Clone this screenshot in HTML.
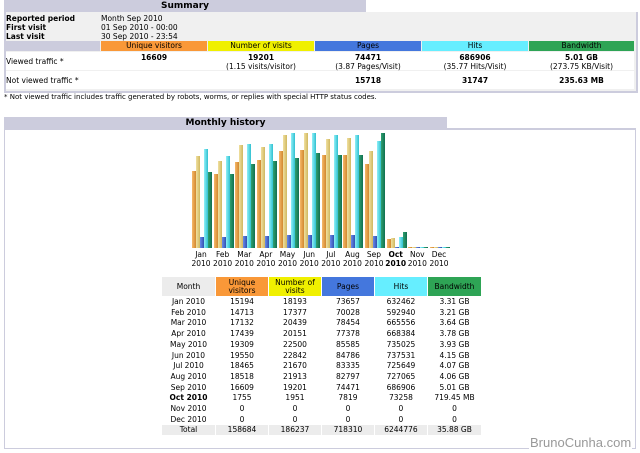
<!DOCTYPE html>
<html><head><meta charset="utf-8"><style>
body{margin:0;width:640px;height:453px;background:#fff;font-family:"DejaVu Sans","Liberation Sans",sans-serif;font-size:7.5px;color:#000;position:relative;overflow:hidden}
.a{position:absolute}
.hdr{background:#ccccdd;font-weight:bold;font-size:9px;text-align:center;line-height:12px}
.box{border:1px solid #ccccdd;border-top:0}
.c{text-align:center}
.b{font-weight:bold}
.bar{position:absolute;bottom:0;width:4px}
.o{background:linear-gradient(90deg,#f7b868,#d08830)}
.y{background:linear-gradient(90deg,#f0e0a0,#d0b860)}
.p{background:linear-gradient(90deg,#6a8ae8,#3050b0)}
.h{background:linear-gradient(90deg,#90f0f8,#30c0d0)}
.g{background:linear-gradient(90deg,#30a070,#107050)}
table{border-collapse:separate;border-spacing:1px;font-size:7.5px}
td{padding:0;text-align:center;height:9.7px;line-height:9.7px}
</style></head><body>
<div class="a hdr" style="left:4px;top:0;width:362px;height:12px">Summary</div>
<div class="a box" style="left:4px;top:12px;width:630px;height:79px;background:#f0f0f0;border-width:2px"></div>
<div class="a b" style="left:6px;top:14px;line-height:9px">Reported period<br>First visit<br>Last visit</div>
<div class="a" style="left:101px;top:14px;line-height:9px">Month Sep 2010<br>01 Sep 2010 - 00:00<br>30 Sep 2010 - 23:54</div>
<div class="a" style="left:6px;top:41px;width:94px;height:10px;background:#ccccdd"></div>
<div class="a c" style="left:101px;top:41px;width:106px;height:10px;line-height:10px;background:#f99838">Unique visitors</div>
<div class="a c" style="left:208px;top:41px;width:106px;height:10px;line-height:10px;background:#f0f000">Number of visits</div>
<div class="a c" style="left:315px;top:41px;width:106px;height:10px;line-height:10px;background:#4477dd">Pages</div>
<div class="a c" style="left:422px;top:41px;width:106px;height:10px;line-height:10px;background:#66eeff">Hits</div>
<div class="a c" style="left:529px;top:41px;width:105px;height:10px;line-height:10px;background:#2ea455">Bandwidth</div>
<div class="a" style="left:6px;top:52px;width:628px;height:18px;background:#fff"></div>
<div class="a" style="left:6px;top:71px;width:628px;height:18px;background:#fff"></div>
<div class="a" style="left:6px;top:57px">Viewed traffic *</div>
<div class="a" style="left:6px;top:76px">Not viewed traffic *</div>
<div class="a c" style="left:101px;top:53px;width:106px;line-height:9px"><b>16609</b></div>
<div class="a c" style="left:208px;top:53px;width:106px;line-height:9px"><b>19201</b><br>(1.15 visits/visitor)</div>
<div class="a c" style="left:315px;top:53px;width:106px;line-height:9px"><b>74471</b><br>(3.87 Pages/Visit)</div>
<div class="a c" style="left:422px;top:53px;width:106px;line-height:9px"><b>686906</b><br>(35.77 Hits/Visit)</div>
<div class="a c" style="left:529px;top:53px;width:105px;line-height:9px"><b>5.01 GB</b><br>(273.75 KB/Visit)</div>
<div class="a c b" style="left:315px;top:76px;width:106px">15718</div>
<div class="a c b" style="left:422px;top:76px;width:106px">31747</div>
<div class="a c b" style="left:529px;top:76px;width:105px">235.63 MB</div>
<div class="a" style="left:4px;top:93px;font-size:7px">* Not viewed traffic includes traffic generated by robots, worms, or replies with special HTTP status codes.</div>

<div class="a hdr" style="left:4px;top:117px;width:443px;height:12px">Monthly history</div>
<div class="a box" style="left:4px;top:128px;width:630px;height:318px;border-top:2px solid #ccccdd"></div>

<div class="a" style="left:192px;top:128px;width:260px;height:120px">
<div class="a" style="left:0;bottom:0;height:120px;width:21px">
<div class="bar o" style="left:0;height:77px"></div><div class="bar y" style="left:4px;height:92px"></div><div class="bar p" style="left:8px;height:11px"></div><div class="bar h" style="left:12px;height:99px"></div><div class="bar g" style="left:16px;height:76px"></div></div>
<div class="a" style="left:21.6px;bottom:0;height:120px;width:21px">
<div class="bar o" style="left:0;height:74px"></div><div class="bar y" style="left:4px;height:87px"></div><div class="bar p" style="left:8px;height:11px"></div><div class="bar h" style="left:12px;height:92px"></div><div class="bar g" style="left:16px;height:74px"></div></div>
<div class="a" style="left:43.3px;bottom:0;height:120px;width:21px">
<div class="bar o" style="left:0;height:86px"></div><div class="bar y" style="left:4px;height:103px"></div><div class="bar p" style="left:8px;height:12px"></div><div class="bar h" style="left:12px;height:104px"></div><div class="bar g" style="left:16px;height:84px"></div></div>
<div class="a" style="left:64.9px;bottom:0;height:120px;width:21px">
<div class="bar o" style="left:0;height:88px"></div><div class="bar y" style="left:4px;height:101px"></div><div class="bar p" style="left:8px;height:12px"></div><div class="bar h" style="left:12px;height:104px"></div><div class="bar g" style="left:16px;height:87px"></div></div>
<div class="a" style="left:86.5px;bottom:0;height:120px;width:21px">
<div class="bar o" style="left:0;height:97px"></div><div class="bar y" style="left:4px;height:113px"></div><div class="bar p" style="left:8px;height:13px"></div><div class="bar h" style="left:12px;height:115px"></div><div class="bar g" style="left:16px;height:90px"></div></div>
<div class="a" style="left:108.2px;bottom:0;height:120px;width:21px">
<div class="bar o" style="left:0;height:98px"></div><div class="bar y" style="left:4px;height:115px"></div><div class="bar p" style="left:8px;height:13px"></div><div class="bar h" style="left:12px;height:115px"></div><div class="bar g" style="left:16px;height:95px"></div></div>
<div class="a" style="left:129.8px;bottom:0;height:120px;width:21px">
<div class="bar o" style="left:0;height:93px"></div><div class="bar y" style="left:4px;height:109px"></div><div class="bar p" style="left:8px;height:13px"></div><div class="bar h" style="left:12px;height:113px"></div><div class="bar g" style="left:16px;height:93px"></div></div>
<div class="a" style="left:151.4px;bottom:0;height:120px;width:21px">
<div class="bar o" style="left:0;height:93px"></div><div class="bar y" style="left:4px;height:110px"></div><div class="bar p" style="left:8px;height:13px"></div><div class="bar h" style="left:12px;height:113px"></div><div class="bar g" style="left:16px;height:93px"></div></div>
<div class="a" style="left:173px;bottom:0;height:120px;width:21px">
<div class="bar o" style="left:0;height:84px"></div><div class="bar y" style="left:4px;height:97px"></div><div class="bar p" style="left:8px;height:12px"></div><div class="bar h" style="left:12px;height:107px"></div><div class="bar g" style="left:16px;height:115px"></div></div>
<div class="a" style="left:194.7px;bottom:0;height:120px;width:21px">
<div class="bar o" style="left:0;height:9px"></div><div class="bar y" style="left:4px;height:10px"></div><div class="bar p" style="left:8px;height:1px"></div><div class="bar h" style="left:12px;height:11px"></div><div class="bar g" style="left:16px;height:16px"></div></div>
<div class="a" style="left:216.3px;bottom:0;height:120px;width:21px">
<div class="bar o" style="left:0;height:1px"></div><div class="bar y" style="left:4px;height:1px"></div><div class="bar p" style="left:8px;height:1px"></div><div class="bar h" style="left:12px;height:1px"></div><div class="bar g" style="left:16px;height:1px"></div></div>
<div class="a" style="left:238px;bottom:0;height:120px;width:21px">
<div class="bar o" style="left:0;height:1px"></div><div class="bar y" style="left:4px;height:1px"></div><div class="bar p" style="left:8px;height:1px"></div><div class="bar h" style="left:12px;height:1px"></div><div class="bar g" style="left:16px;height:1px"></div></div>
</div>
<div class="a" style="left:189px;top:250px;font-size:7.5px;line-height:9px">
<span class="a c" style="left:0;width:24px">Jan<br>2010</span><span class="a c" style="left:21.6px;width:24px">Feb<br>2010</span><span class="a c" style="left:43.3px;width:24px">Mar<br>2010</span><span class="a c" style="left:64.9px;width:24px">Apr<br>2010</span><span class="a c" style="left:86.5px;width:24px">May<br>2010</span><span class="a c" style="left:108.2px;width:24px">Jun<br>2010</span><span class="a c" style="left:129.8px;width:24px">Jul<br>2010</span><span class="a c" style="left:151.4px;width:24px">Aug<br>2010</span><span class="a c" style="left:173px;width:24px">Sep<br>2010</span><span class="a c b" style="left:194.7px;width:24px">Oct<br>2010</span><span class="a c" style="left:216.3px;width:24px">Nov<br>2010</span><span class="a c" style="left:238px;width:24px">Dec<br>2010</span>
</div>

<table class="a" style="left:161px;top:276px;width:321px">
<tr><td style="background:#ececec;width:52px;height:19px">Month</td><td style="background:#f99838;width:51px;line-height:8px">Unique<br>visitors</td><td style="background:#f0f000;width:51px;line-height:8px">Number of<br>visits</td><td style="background:#4477dd;width:51px">Pages</td><td style="background:#66eeff;width:51px">Hits</td><td style="background:#2ea455;width:52px">Bandwidth</td></tr>
<tr><td>Jan 2010</td><td>15194</td><td>18193</td><td>73657</td><td>632462</td><td>3.31 GB</td></tr>
<tr><td>Feb 2010</td><td>14713</td><td>17377</td><td>70028</td><td>592940</td><td>3.21 GB</td></tr>
<tr><td>Mar 2010</td><td>17132</td><td>20439</td><td>78454</td><td>665556</td><td>3.64 GB</td></tr>
<tr><td>Apr 2010</td><td>17439</td><td>20151</td><td>77378</td><td>668384</td><td>3.78 GB</td></tr>
<tr><td>May 2010</td><td>19309</td><td>22500</td><td>85585</td><td>735025</td><td>3.93 GB</td></tr>
<tr><td>Jun 2010</td><td>19550</td><td>22842</td><td>84786</td><td>737531</td><td>4.15 GB</td></tr>
<tr><td>Jul 2010</td><td>18465</td><td>21670</td><td>83335</td><td>725649</td><td>4.07 GB</td></tr>
<tr><td>Aug 2010</td><td>18518</td><td>21913</td><td>82797</td><td>727065</td><td>4.06 GB</td></tr>
<tr><td>Sep 2010</td><td>16609</td><td>19201</td><td>74471</td><td>686906</td><td>5.01 GB</td></tr>
<tr><td class="b">Oct 2010</td><td>1755</td><td>1951</td><td>7819</td><td>73258</td><td>719.45 MB</td></tr>
<tr><td>Nov 2010</td><td>0</td><td>0</td><td>0</td><td>0</td><td>0</td></tr>
<tr><td>Dec 2010</td><td>0</td><td>0</td><td>0</td><td>0</td><td>0</td></tr>
<tr style="background:#ececec"><td>Total</td><td>158684</td><td>186237</td><td>718310</td><td>6244776</td><td>35.88 GB</td></tr>
</table>
<div class="a" style="left:529px;top:436px;font-family:'Liberation Sans',sans-serif;font-size:13px;color:#999;background:#fff;padding:0 1px;line-height:14px">BrunoCunha.com</div>
</body></html>
